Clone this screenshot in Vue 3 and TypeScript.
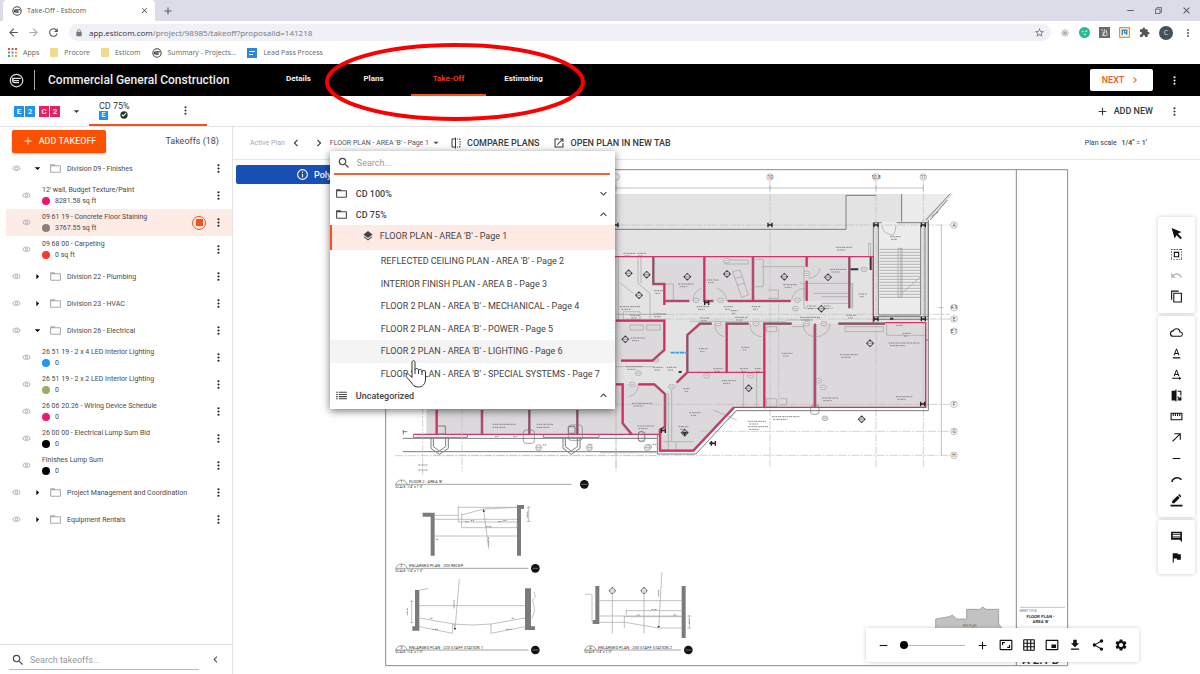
<script setup lang="ts">
import { h, ref } from 'vue'

const paths: Record<string, string> = {
  search: 'M15.5 14h-.79l-.28-.27A6.471 6.471 0 0 0 16 9.5 6.5 6.5 0 1 0 9.5 16c1.61 0 3.09-.59 4.23-1.57l.27.28v.79l5 4.99L20.49 19l-4.99-5zm-6 0C7.01 14 5 11.99 5 9.5S7.01 5 9.5 5 14 7.01 14 9.5 11.99 14 9.5 14z',
  more: 'M12 8a2 2 0 1 0 0-4 2 2 0 0 0 0 4zm0 2a2 2 0 1 0 0 4 2 2 0 0 0 0-4zm0 6a2 2 0 1 0 0 4 2 2 0 0 0 0-4z',
  folder: 'M20 6h-8l-2-2H4c-1.1 0-1.99.9-1.99 2L2 18c0 1.1.9 2 2 2h16c1.1 0 2-.9 2-2V8c0-1.1-.9-2-2-2zm0 12H4V8h16v10z',
  eye: 'M12 6c3.79 0 7.17 2.13 8.82 5.5C19.17 14.87 15.79 17 12 17s-7.17-2.13-8.82-5.5C4.83 8.13 8.21 6 12 6m0-2C7 4 2.73 7.11 1 11.5 2.73 15.89 7 19 12 19s9.27-3.11 11-7.5C21.27 7.11 17 4 12 4zm0 5a2.5 2.5 0 1 1 0 5 2.5 2.5 0 0 1 0-5m0-2a4.5 4.5 0 1 0 0 9 4.5 4.5 0 0 0 0-9z',
  settings: 'M19.14 12.94c.04-.3.06-.61.06-.94 0-.32-.02-.64-.07-.94l2.03-1.58c.18-.14.23-.41.12-.61l-1.92-3.32c-.12-.22-.37-.29-.59-.22l-2.39.96c-.5-.38-1.03-.7-1.62-.94l-.36-2.54c-.04-.24-.24-.41-.48-.41h-3.84c-.24 0-.43.17-.47.41l-.36 2.54c-.59.24-1.13.57-1.62.94l-2.39-.96c-.22-.08-.47 0-.59.22L2.74 8.87c-.12.21-.08.47.12.61l2.03 1.58c-.05.3-.09.63-.09.94s.02.64.07.94l-2.03 1.58c-.18.14-.23.41-.12.61l1.92 3.32c.12.22.37.29.59.22l2.39-.96c.5.38 1.03.7 1.62.94l.36 2.54c.05.24.24.41.48.41h3.84c.24 0 .44-.17.47-.41l.36-2.54c.59-.24 1.13-.56 1.62-.94l2.39.96c.22.08.47 0 .59-.22l1.92-3.32c.12-.22.07-.47-.12-.61l-2.01-1.58zM12 15.6a3.6 3.6 0 1 1 0-7.2 3.6 3.6 0 0 1 0 7.2z',
  share: 'M18 16.08c-.76 0-1.44.3-1.96.77L8.91 12.7c.05-.23.09-.46.09-.7s-.04-.47-.09-.7l7.05-4.11c.54.5 1.25.81 2.04.81a3 3 0 1 0-3-3c0 .24.04.47.09.7L8.04 9.81A3 3 0 1 0 6 15c.79 0 1.5-.31 2.04-.81l7.12 4.16c-.05.21-.08.43-.08.65A2.92 2.92 0 1 0 18 16.08z',
  download: 'M19 9h-4V3H9v6H5l7 7 7-7zM5 18v2h14v-2H5z',
  grid: 'M20 2H4c-1.1 0-2 .9-2 2v16c0 1.1.9 2 2 2h16c1.1 0 2-.9 2-2V4c0-1.1-.9-2-2-2zM8 20H4v-4h4v4zm0-6H4v-4h4v4zm0-6H4V4h4v4zm6 12h-4v-4h4v4zm0-6h-4v-4h4v4zm0-6h-4V4h4v4zm6 12h-4v-4h4v4zm0-6h-4v-4h4v4zm0-6h-4V4h4v4z',
  aspect: 'M19 12h-2v3h-3v2h5v-5zM7 9h3V7H5v5h2V9zm14-6H3c-1.1 0-2 .9-2 2v14c0 1.1.9 2 2 2h18c1.1 0 2-.9 2-2V5c0-1.1-.9-2-2-2zm0 16H3V5h18v14z',
  pip: 'M19 11h-8v6h8v-6zm4 8V5c0-1.1-.9-2-2-2H3c-1.1 0-2 .9-2 2v14c0 1.1.9 2 2 2h18c1.1 0 2-.9 2-2zm-2 0H3V5h18v14z',
  plus: 'M19 13h-6v6h-2v-6H5v-2h6V5h2v6h6v2z',
  minus: 'M19 13H5v-2h14v2z',
  close: 'M19 6.4 17.6 5 12 10.6 6.4 5 5 6.4l5.6 5.6L5 17.6 6.4 19l5.6-5.6 5.6 5.6 1.4-1.4-5.6-5.6z',
  left: 'M15.4 7.4 14 6l-6 6 6 6 1.4-1.4-4.6-4.6z',
  right: 'M10 6 8.6 7.4l4.6 4.6-4.6 4.6L10 18l6-6z',
  up: 'M12 8l-6 6 1.4 1.4 4.6-4.6 4.6 4.6L18 14z',
  down: 'M16.6 8.6 12 13.2 7.4 8.6 6 10l6 6 6-6z',
  caretDown: 'M6 9l6 6 6-6z',
  caretRight: 'M9 5l7 7-7 7z',
  layers: 'M11.99 18.54l-7.37-5.73L3 14.07l9 7 9-7-1.63-1.27-7.38 5.74zM12 16l7.36-5.73L21 9l-9-7-9 7 1.63 1.27L12 16z',
  list: 'M2 5h3v2H2zm5 0h15v2H7zM2 9h3v2H2zm5 0h15v2H7zM2 13h3v2H2zm5 0h15v2H7zM2 17h3v2H2zm5 0h15v2H7z',
  compare: 'M10 3H5c-1.1 0-2 .9-2 2v14c0 1.1.9 2 2 2h5v2h2V1h-2v2zm0 16H5V5h5v14zM14 3h2v2h-2zm4 0h1c1.1 0 2 .9 2 2v1h-2V5h-1zm1 5h2v3h-2zm0 5h2v3h-2zm0 5h2v1c0 1.1-.9 2-2 2h-1v-2h1zm-5 1h2v2h-2z',
  openNew: 'M3 3h9v2H5v14h14v-7h2v9H3zM14 3h7v7h-2V6.4l-9.8 9.8-1.4-1.4L17.6 5H14z',
  info: 'M11 7h2v2h-2zm0 4h2v6h-2zm1-9a10 10 0 1 0 0 20 10 10 0 0 0 0-20zm0 18a8 8 0 1 1 0-16 8 8 0 0 1 0 16z',
  back: 'M20 11H7.8l5.6-5.6L12 4l-8 8 8 8 1.4-1.4L7.8 13H20z',
  forward: 'M4 11h12.2l-5.6-5.6L12 4l8 8-8 8-1.4-1.4 5.6-5.6H4z',
  refresh: 'M17.65 6.35A8 8 0 1 0 19.73 14h-2.08A6 6 0 1 1 12 6c1.66 0 3.14.69 4.22 1.78L13 11h7V4l-2.35 2.35z',
  lock: 'M18 8h-1V6A5 5 0 0 0 7 6v2H6c-1.1 0-2 .9-2 2v10c0 1.1.9 2 2 2h12c1.1 0 2-.9 2-2V10c0-1.1-.9-2-2-2zM9 6a3 3 0 0 1 6 0v2H9z',
  star: 'M22 9.24l-7.19-.62L12 2 9.19 8.63 2 9.24l5.46 4.73L5.82 21 12 17.27 18.18 21l-1.63-7.03L22 9.24zM12 15.4l-3.76 2.27 1-4.28-3.32-2.88 4.38-.38L12 6.1l1.71 4.04 4.38.38-3.32 2.88 1 4.28L12 15.4z',
  snow: 'M11 2h2v7.3l5.4-4.9 1.3 1.4-5 5.2H22v2h-7.3l5 5.2-1.3 1.4-5.4-4.9V22h-2v-7.3l-5.4 4.9-1.3-1.4 5-5.2H2v-2h7.3l-5-5.2 1.3-1.4L11 9.3z',
  puzzle: 'M20.5 11H19V7c0-1.1-.9-2-2-2h-4V3.5a2.5 2.5 0 0 0-5 0V5H4c-1.1 0-1.99.9-1.99 2v3.8H3.5a2.7 2.7 0 0 1 0 5.4H2V20c0 1.1.9 2 2 2h3.8v-1.5a2.7 2.7 0 0 1 5.4 0V22H17c1.1 0 2-.9 2-2v-4h1.5a2.5 2.5 0 0 0 0-5z',
  restore: 'M7 3h14v14h-4v4H3V7h4zm2 4h8v8h2V5H9zM5 9v10h10V9z',
  check: 'M12 1a11 11 0 1 0 0 22 11 11 0 0 0 0-22zm-2.5 16L4.5 12l2-2 3 3 8-7.5 2 2z',
  cursor: 'M3 2l18 7-6.5 3.500L22 20l-2.5 2.5-7.5-7.5L8.5 21z',
  marquee: 'M2 2h3v1H2zm5 0h3v1H7zm5 0h3v1h-3zm5 0h5v1h-5zM2 6h1v3H2zm19 0h1v3h-1zM2 11h1v3H2zm19 0h1v3h-1zM2 16h1v6H2zm19 0h1v6h-1zM6 21h3v1H6zm5 0h3v1h-3zm5 0h3v1h-3zM7 7h10v10H7zm2 2v6h6V9z',
  undo: 'M12.5 8c-2.65 0-5.05 1-6.9 2.6L2 7v9h9l-3.62-3.62A8 8 0 0 1 20 16l2.37-.78A10.5 10.5 0 0 0 12.5 8z',
  copy: 'M16 1H2v17h2V3h12zM6 5v18h16V5zm2 2h12v14H8z',
  cloud: 'M19.35 10.04A7.49 7.49 0 0 0 12 4C9.11 4 6.6 5.64 5.35 8.04A5.994 5.994 0 0 0 6 20h13a5 5 0 0 0 .35-9.96zM19 18H6a4 4 0 0 1 0-8h.71a5.5 5.5 0 0 1 10.79 1.5v.5H19a3 3 0 0 1 0 6z',
  textLine: 'M5 19h14v2H5zm4.5-6h5l.9 2.2h2.1L12.75 3h-1.5L6.5 15.2h2.1zM12 5.5l1.9 5.5h-3.8z',
  textArrow: 'M4 18h13v-2l4 3-4 3v-2H4zm5.5-5h5l.9 2.2h2.1L12.75 3h-1.5L6.5 15.2h2.1zM12 5.5l1.9 5.5h-3.8z',
  flip: 'M3 3h7V1h2v22h-2v-2H3zm11 0h7v9h-2V5h-5zm0 10l5 4v-3h2v7h-7v-2h3l-3-2z',
  ruler: 'M1 5h22v14H1zm2 2v10h18V7h-2v4h-2V7h-2v4h-2V7h-2v4H9V7H7v4H5V7z',
  arrow: 'M8 4h12v12h-2V7.4L5.4 20 4 18.6 16.6 6H8z',
  arc: 'M2 16C5 6 15 5 22 11l-1.5 2.5C14 8 7 10 4.5 17z',
  pen: 'M4 13v4h4L18 7l-4-4zM19 6l2-2-4-4-2 2zM1 20h22v3H1z',
  comment: 'M2 3h20v19l-4-4H2zm3 3v2h14V6zm0 3v2h14V9zm0 3v2h14v-2z',
  flag: 'M14.4 6 14 4H5v17h2v-7h5.6l.4 2h7V6z',
}

const Icon = (props: { n: string; s: number }) =>
  h('svg', { class: 'icon', viewBox: '0 0 24 24', width: props.s, height: props.s, 'aria-hidden': 'true' }, [
    h('path', { d: paths[props.n], fill: 'currentColor', 'fill-rule': 'evenodd' }),
  ])
Icon.props = ['n', 's']

interface Row { label: string; open?: boolean; qty?: string; color?: string; active?: boolean }
const rows: Row[] = [
  { label: 'Division 09 - Finishes', open: true },
  { label: "12' wall, Budget Texture/Paint", qty: '8281.58 sq ft', color: '#f0146c' },
  { label: '09 61 19 - Concrete Floor Staining', qty: '3767.55 sq ft', color: '#8d7f7f', active: true },
  { label: '09 68 00 - Carpeting', qty: '0 sq ft', color: '#f8382c' },
  { label: 'Division 22 - Plumbing', open: false },
  { label: 'Division 23 - HVAC', open: false },
  { label: 'Division 26 - Electrical', open: true },
  { label: '26 51 19 - 2 x 4 LED Interior Lighting', qty: '0', color: '#2196f3' },
  { label: '26 51 19 - 2 x 2 LED Interior Lighting', qty: '0', color: '#9fa968' },
  { label: '26 06 20.26 - Wiring Device Schedule', qty: '0', color: '#ee1a66' },
  { label: '26 00 00 - Electrical Lump Sum Bid', qty: '0', color: '#000' },
  { label: 'Finishes Lump Sum', qty: '0', color: '#000' },
  { label: 'Project Management and Coordination', open: false },
  { label: 'Equipment Rentals', open: false },
]
const tabs = ['Details', 'Plans', 'Take-Off', 'Estimating']
const pages = [
  "REFLECTED CEILING PLAN - AREA 'B' - Page 2",
  'INTERIOR FINISH PLAN - AREA B - Page 3',
  "FLOOR 2 PLAN - AREA 'B' - MECHANICAL - Page 4",
  "FLOOR 2 PLAN - AREA 'B' - POWER - Page 5",
  "FLOOR 2 PLAN - AREA 'B' - LIGHTING - Page 6",
  "FLOOR 2 PLAN - AREA 'B' - SPECIAL SYSTEMS - Page 7",
]
const hovered = 4
const toolGroups = [
  [['cursor', 'Select'], ['marquee', 'Select area'], ['undo', 'Undo'], ['copy', 'Copy']],
  [['cloud', 'Cloud'], ['textLine', 'Text'], ['textArrow', 'Callout'], ['flip', 'Flip'], ['ruler', 'Measure'], ['arrow', 'Arrow'], ['minus', 'Line'], ['arc', 'Arc'], ['pen', 'Pen']],
  [['comment', 'Comment'], ['flag', 'Flag']],
]
const viewTools = [['aspect', 'Fit'], ['grid', 'Grid'], ['pip', 'Overview'], ['download', 'Download'], ['share', 'Share'], ['settings', 'Settings']]
const zoomLevel = ref(0)
const planSearch = ref('')
const takeoffSearch = ref('')

const treads = Array.from({ length: 17 }, (_, i) => 268 + i * 9)
const gridTop = [[48, ''], [510, '10'], [828, '10.8'], [970, '11']] as [number, string][]
const gridSide = [[195, 'A'], [443, 'A.9'], [477, 'E'], [514, 'E.1'], [733, 'F'], [814, 'G'], [886, 'H']] as [number, string][]
// Room tags and dimension notes: x, y, length
const notes = [
  [235, 372, 46], [320, 360, 36], [550, 374, 42], [690, 328, 50], [776, 402, 24], [870, 230, 32], [708, 262, 48], [392, 452, 22],
  [92, 534, 44], [296, 566, 26], [424, 562, 24], [545, 580, 34], [720, 584, 54], [866, 549, 92], [888, 710, 50], [666, 714, 50],
  [96, 730, 60], [112, 798, 52], [268, 758, 34], [444, 784, 54], [444, 800, 60], [516, 770, 84], [365, 662, 44], [162, 392, 26],
  [290, 440, 40], [372, 440, 26], [455, 440, 26], [620, 438, 30], [672, 438, 20], [405, 472, 40], [300, 474, 30], [600, 472, 60],
  [78, 620, 50], [160, 622, 30], [200, 622, 30], [340, 626, 30], [420, 626, 24], [464, 626, 20], [60, 440, 60], [90, 466, 30],
  [160, 462, 38], [70, 280, 36], [112, 280, 26], [740, 466, 30], [908, 520, 24], [236, 800, 30], [250, 686, 20], [885, 488, 40],
]
const markers = [[86, 340], [140, 344], [117, 406], [262, 350], [381, 342], [553, 350], [684, 352], [664, 446], [76, 538], [810, 550], [446, 685], [254, 818], [785, 778], [18, 480]]
const tags = [[380, 302], [620, 340], [792, 328], [288, 421], [362, 421], [592, 421], [586, 446], [354, 491], [468, 491], [620, 491], [672, 491], [97, 673], [320, 647], [452, 647], [215, 680], [146, 860], [675, 775], [670, 682], [656, 662], [168, 600], [115, 640]]
const columns = [[48, 195], [510, 195], [828, 195], [970, 195], [828, 477], [970, 477], [968, 732], [340, 850], [320, 428], [190, 812]]
const captions = [
  { x: 48, y: 253, n: '1', t: "FLOOR 2 - AREA 'B'", end: 575, dot: 613 },
  { x: 48, y: 505, n: '2', t: 'ENLARGED PLAN - 200 RECEP', end: 445, dot: 466 },
  { x: 48, y: 750, n: '3', t: 'ENLARGED PLAN - 220 STAFF STATION 1', end: 445, dot: 466 },
  { x: 615, y: 750, n: '4', t: 'ENLARGED PLAN - 250 STAFF STATION 2', end: 903, dot: 925 },
]
const walls = 'M160 290V372H193V435M193 423H268M313 290V423H340M383 423H459V290M459 423H572M620 290V320M620 362V423M748 290V445M48 482H193V570L157 602H63M335 491H300L262 525V637M380 637V491H446M262 637L230 668M493 742V491H575M645 742V491M715 491H855M48 673H68V790L95 823M115 673H163L195 702V800L180 810V872H280L402 742M-490 750V823M-354 750V823M-212 750V823M-68 750V823'
const outline = 'M-400 290H820V490M855 488H977V742H402L280 872H180V823H-560M262 637H493'
</script>

<template>
  <div class="app">
    <header class="browser">
      <div class="tabstrip">
        <div class="tab">
          <svg class="logo" viewBox="0 0 24 24" width="10" height="10"><circle cx="12" cy="12" r="10" /><path d="M20 9H8.500a3 3 0 0 0 0 6H16M6 12h10" /></svg>
          <span class="grow">Take-Off - Esticom</span>
          <button aria-label="Close tab"><Icon n="close" :s="9" /></button>
        </div>
        <button class="newtab" aria-label="New tab"><Icon n="plus" :s="12" /></button>
        <div class="window">
          <button aria-label="Minimize"><Icon n="minus" :s="11" /></button>
          <button aria-label="Restore"><Icon n="restore" :s="9" /></button>
          <button aria-label="Close"><Icon n="close" :s="11" /></button>
        </div>
      </div>
      <div class="address">
        <button aria-label="Back"><Icon n="back" :s="13" /></button>
        <button aria-label="Forward" class="dim"><Icon n="forward" :s="13" /></button>
        <button aria-label="Reload"><Icon n="refresh" :s="13" /></button>
        <div class="url">
          <Icon n="lock" :s="8" />
          <span class="grow"><b>app.esticom.com</b>/project/98985/takeoff?proposalId=141218</span>
          <Icon n="star" :s="11" />
        </div>
        <div class="extensions">
          <Icon n="snow" :s="10" class="dim" />
          <svg viewBox="0 0 24 24" width="11" height="11"><circle cx="12" cy="12" r="12" fill="#27bb93" /><circle cx="8" cy="10" r="2" fill="#c8f2e5" /><circle cx="16" cy="9" r="2" fill="#c8f2e5" /><circle cx="13" cy="16" r="2" fill="#c8f2e5" /></svg>
          <svg viewBox="0 0 24 24" width="11" height="11"><path fill="#6a6a6a" d="M0 0h24v24H0z" /><path fill="none" stroke="#ddd" stroke-width="2" d="M5 5l5 4M12 5v5M12 19l-5-1M9 11v7M16 6v5" /><circle cx="14" cy="15" r="4" fill="none" stroke="#ddd" stroke-width="2" /></svg>
          <svg viewBox="0 0 24 24" width="11" height="11"><rect x="1" y="1" width="22" height="22" rx="3" fill="#fff4df" stroke="#f59222" stroke-width="3" /><path d="M7 18V7h10v10M12 7v6h5" fill="none" stroke="#2b8fc8" stroke-width="3" /></svg>
          <Icon n="puzzle" :s="11" />
          <span class="avatar">C</span>
          <button aria-label="Browser menu"><Icon n="more" :s="12" /></button>
        </div>
      </div>
      <nav class="bookmarks">
        <a href="#apps"><svg viewBox="0 0 9 9" width="9" height="9"><path fill="#dc4c3f" d="M0 0h2v2H0zM3.500 0h2v2h-2zM7 0h2v2H7z" /><path fill="#4aa564" d="M0 3.500h2v2H0z" /><path fill="#4285f4" d="M3.500 3.500h2v2h-2z" /><path fill="#e9a13b" d="M7 3.500h2v2H7zM3.500 7h2v2h-2zM7 7h2v2H7z" /><path fill="#4aa564" d="M0 7h2v2H0z" /></svg>Apps</a>
        <a href="#procore"><i class="bfolder"></i>Procore</a>
        <a href="#esticom"><i class="bfolder"></i>Esticom</a>
        <a href="#summary"><svg class="logo" viewBox="0 0 24 24" width="10" height="10"><circle cx="12" cy="12" r="10" /><path d="M20 9H8.500a3 3 0 0 0 0 6H16M6 12h10" /></svg>Summary - Projects...</a>
        <a href="#lead"><svg viewBox="0 0 10 10" width="10" height="10"><path fill="#2f86e0" d="M0 0h10v10H0z" /><path stroke="#fff" d="M2 3.500h6M2 6.500h4" /></svg>Lead Pass Process</a>
      </nav>
    </header>

    <div class="topbar">
      <svg class="logo brand" viewBox="0 0 24 24" width="15" height="15"><circle cx="12" cy="12" r="10" /><path d="M19 8.500H9a3.500 3.500 0 0 0 0 7h7M7 12h9M12 8.500H5" /></svg>
      <h1>Commercial General Construction</h1>
      <nav class="tabs">
        <a v-for="t in tabs" :key="t" :href="'#' + t" :class="{ on: t === 'Take-Off' }">{{ t }}</a>
        <svg class="callout" viewBox="0 0 262 80" width="262" height="80" aria-hidden="true"><ellipse cx="131" cy="40" rx="128" ry="37" /></svg>
      </nav>
      <button class="next">NEXT <Icon n="right" :s="12" /></button>
      <button class="menu" aria-label="Project menu"><Icon n="more" :s="13" /></button>
    </div>

    <div class="sheetbar">
      <button class="chips" aria-label="Estimates"><b>E</b><b>2</b><b class="pink">C</b><b class="pink">2</b><Icon n="caretDown" :s="11" /></button>
      <div class="sheet">
        <div>
          <span>CD 75%</span>
          <div class="status"><b>E</b><Icon n="check" :s="8" /></div>
        </div>
        <button aria-label="Sheet menu"><Icon n="more" :s="13" /></button>
      </div>
      <button class="addnew"><Icon n="plus" :s="13" />ADD NEW</button>
      <button class="menu" aria-label="Estimate menu"><Icon n="more" :s="13" /></button>
    </div>

    <div class="body">
      <aside>
        <div class="sidehead">
          <button class="add"><Icon n="plus" :s="12" />ADD TAKEOFF</button>
          <span>Takeoffs (18)</span>
        </div>
        <ul class="rows">
          <li v-for="r in rows" :key="r.label" :class="{ item: r.qty, active: r.active }">
            <button class="eye" :aria-label="'Show ' + r.label"><Icon n="eye" :s="9" /></button>
            <template v-if="r.qty">
              <div class="info">
                <span>{{ r.label }}</span>
                <span class="qty"><i :style="{ background: r.color }"></i>{{ r.qty }}</span>
              </div>
              <span v-if="r.active" class="rec"></span>
            </template>
            <template v-else>
              <button class="twist" :aria-label="'Toggle ' + r.label"><Icon :n="r.open ? 'caretDown' : 'caretRight'" :s="r.open ? 11 : 9" /></button>
              <Icon n="folder" :s="13" class="fold" />
              <span class="grow">{{ r.label }}</span>
            </template>
            <button class="dots" :aria-label="'Menu for ' + r.label"><Icon n="more" :s="13" /></button>
          </li>
        </ul>
        <div class="sidefoot">
          <label><Icon n="search" :s="14" /><input v-model="takeoffSearch" type="text" placeholder="Search takeoffs..." aria-label="Search takeoffs" /></label>
          <button aria-label="Collapse"><Icon n="left" :s="13" /></button>
        </div>
      </aside>

      <main>
        <div class="planbar">
          <span class="muted">Active Plan</span>
          <button aria-label="Previous plan"><Icon n="left" :s="14" /></button>
          <button aria-label="Next plan"><Icon n="right" :s="14" /></button>
          <div class="picker">
            <button class="current" aria-expanded="true">FLOOR PLAN - AREA 'B' - Page 1<Icon n="caretDown" :s="10" /></button>
            <div class="popup">
              <label class="find"><Icon n="search" :s="14" /><input v-model="planSearch" type="text" placeholder="Search..." aria-label="Search plans" /></label>
              <button class="group"><Icon n="folder" :s="13" /><span>CD 100%</span><Icon n="down" :s="13" /></button>
              <button class="group"><Icon n="folder" :s="13" /><span>CD 75%</span><Icon n="up" :s="13" /></button>
              <button class="chosen"><Icon n="layers" :s="12" />FLOOR PLAN - AREA 'B' - Page 1</button>
              <ul class="pages">
                <li v-for="(p, i) in pages" :key="p"><button :class="{ hover: i === hovered }">{{ p }}</button></li>
              </ul>
              <button class="group"><Icon n="list" :s="13" /><span>Uncategorized</span><Icon n="up" :s="13" /></button>
              <svg class="hand" viewBox="0 0 24 30" width="24" height="30" aria-hidden="true"><path d="M8 16V3.500C8 1 11 1 11 3.500V11c0-2 3.500-2 3.500 0v1c0-2 3.500-2 3.500 0v1c0-2 3.500-2 3.500 0v7c0 5-3 8-7 8-4 0-5.500-1.500-7.500-5L2.500 18C1 15.500 4 14 5.500 16L8 18.500z" /><path d="M11 11v4M14.500 12v3M18 13v3" /></svg>
            </div>
          </div>
          <button class="action"><Icon n="compare" :s="12" />COMPARE PLANS</button>
          <button class="action"><Icon n="openNew" :s="12" />OPEN PLAN IN NEW TAB</button>
          <span class="scale">Plan scale <b>1/4" = 1'</b></span>
        </div>

        <div class="canvas">
          <svg class="plan" viewBox="0 0 2901 1542" preserveAspectRatio="xMinYMin meet" role="img" aria-label="Floor plan">
            <g transform="translate(1101 0)">
              <path class="frame" d="M-643 29H1403V1517H-643zM1249 29V1517" />
              <path fill="#e4e3e4" d="M-520 102H1060L985 180V742H405L283 872H180V823H-520z" />
              <path fill="#dbd9db" d="M-520 482H193V570L157 602H48V673H165L195 702V823H-520zM160 290H748V423H193V372H160zM300 491H493V637H262V525zM493 491H977V742H402L280 872H180V720L262 637H493z" />
              <path fill="#ececec" d="M738 102H905V185H835V465H965V180L1055 102H738z" />
              <path class="axis" d="M48 62V925M510 62V925M828 62V925M970 62V925M-400 195H1050M48 463H1050M0 477H1050M0 733H1050M300 814H1050M-500 886H1050M536 430V740" />
              <path class="thin" d="M48 84H972M1024 195V886M1015 443H1030M48 76V92M510 76V92M828 76V92M970 76V92" />
              <g v-for="[x, t] in gridTop" :key="x" class="bubble"><circle :cx="x" cy="51" r="10" /><text :x="x" y="56">{{ t }}</text></g>
              <g v-for="[y, t] in gridSide" :key="y" class="bubble"><circle cx="1062" :cy="y" r="10" /><text x="1062" :y="y + 5">{{ t }}</text></g>
              <path class="struct" d="M-300 208H738V106H828M905 102V185M890 188H985V470H820V188H845M835 195V465H962V195M975 195V470M985 180V752H408L288 882H172V825M978 180L1050 102M990 180L1042 120M995 170L1015 155M820 478H985M975 540H985" />
              <path class="thin" d="M902 265V410M894 265H906V412H894zM962 350L906 400M845 195Q850 225 880 225Q888 210 888 195M55 290V480M114 290V370L150 400V480M123 290V370M62 370L100 400M70 455H120V478H70zM195 372H220V423M466 298H490V380H466M485 320H612V415M600 370H745M612 370V445H700M665 410H748M665 430H748M640 400H748M735 500H850V515H735zM860 490V526H975M430 637V742M470 637V742M500 500H530V515H500zM500 716H530V740H500zM540 716H560V735H540M215 690V845M190 845H280M205 700V870M228 845V870M340 750L410 780M385 780L412 750M90 495H130V510H90zM140 495H180V510H140zM756 370V445M752 370H758V445M806 290V250H812V330M505 390H535V415H505M398 335L420 330L445 405L425 412zM405 355L428 350M410 375L434 370M280 423A35 35 0 0 1 305 385M380 423A40 40 0 0 0 350 385M575 420A40 40 0 0 1 612 385M345 491A35 35 0 0 0 372 530M450 491A35 35 0 0 0 485 530M610 491A35 35 0 0 0 640 530M650 530A40 40 0 0 0 690 491M625 355A35 35 0 0 0 660 325M115 673A35 35 0 0 1 85 710M48 620H160M48 463H200M270 484H560M640 500V742M560 480H640M575 500H610M375 300H445V312H375zM0 835H170M0 878H170" />
              <path v-for="y in treads" :key="y" class="tread" :d="`M838 ${y}H960`" />
              <path class="dark" d="M750 328H775M812 290V330M870 476H880M236 636H245M328 850H340" />
              <g v-for="([x, y, w], i) in notes" :key="'n' + i" class="note"><path :d="`M${x} ${y}h${w}M${x + 4} ${y + 8}h${w / 2}`" /></g>
              <g v-for="([x, y], i) in tags" :key="'t' + i" class="tag"><ellipse :cx="x" :cy="y" rx="9" ry="7" /><path :d="`M${x - 5} ${y}h10`" /></g>
              <g v-for="([x, y], i) in markers" :key="'m' + i" class="marker"><path :d="`M${x - 12} ${y}l12 -12l12 12l-12 12z`" /><circle :cx="x" :cy="y" r="7" /><path class="mid" :d="`M${x - 5} ${y}h10`" /></g>
              <path class="wallback" :d="walls" />
              <path class="wall" :d="walls" />
              <path class="outline" :d="outline" />
              <path v-for="([x, y], i) in columns" :key="'c' + i" class="column" :d="`M${x - 6} ${y - 7}v14M${x + 6} ${y - 7}v14M${x - 6} ${y}h12`" />
              <rect class="loop" x="632" y="735" width="25" height="28" rx="8" /><rect class="loop" x="115" y="815" width="18" height="28" rx="7" />
              <path d="M212 578H262" stroke="#3b9de0" stroke-width="5" stroke-dasharray="12 2" />
              <path fill="#c2c2c2" stroke="#888" stroke-width="2" d="M1007 1410V1377L1047 1370L1057 1365L1070 1377H1100V1348H1140L1148 1341L1158 1348H1196V1392L1204 1402V1410z" />
              <path class="thin" d="M1260 1342H1395" />
              <text class="tiny" x="1258" y="1357">SHEET TITLE</text>
              <text class="tiny" x="1088" y="1401">KEY PLAN</text>
              <text class="sheetname" x="1322" y="1375">FLOOR PLAN -</text>
              <text class="sheetname" x="1322" y="1389">AREA 'B'</text>
              <text class="sheetno" x="1322" y="1512">A 2.1 B</text>
            </g>

            <g transform="translate(441 720)">
              <path class="struct" d="M68 115H830M68 155H830M100 103V112H262V103M490 103V112H657V103M153 112V145L178 163L205 145V112M160 112V140L178 153L197 140V112M549 112V145L574 163L600 145V112M556 112V140L574 153L592 140V112M68 95H82M70 90V104" />
              <path class="axis" d="M128 20V225M246 20V215M708 30V215M45 167H830" />
              <rect class="loop" x="430" y="90" width="33" height="40" rx="8" /><rect class="loop" x="565" y="75" width="42" height="46" rx="8" /><rect class="loop" x="775" y="95" width="20" height="30" rx="7" />
              <path class="struct" d="M172 78H196V102H172zM565 80H585V100H565z" />
              <g class="note"><path d="M338 73h70M338 82h40M470 73h50M470 82h40M115 195h28M115 210h28M345 110h12M400 110h12M625 133h12M488 135h12M818 133h12" /></g>
              <g class="tag"><circle cx="476" cy="143" r="9" /><circle cx="628" cy="143" r="9" /><circle cx="802" cy="143" r="9" /><path d="M468 143h16M620 143h16M794 143h16" /></g>

              <path class="solid" d="M128 338H164V467H152V350H128zM411 315H432V327H423V467H411zM105 570H118V692H97V679H105zM435 565H453V679H465V690H435zM646 558H658V672H638V660H646zM905 558H917V714H905z" />
              <path class="thin" d="M164 346H235M164 358H411M164 408H411M235 322H411M235 318V366H411M245 345L311 327L411 322M245 340V383H411V370M311 330L326 446M446 318V366M440 322H452M440 364H452M118 617H435M118 654L222 672L225 688M118 680L218 700V672Q280 678 333 672V700L435 680M333 672L435 654M238 537L225 688M95 600V668M90 604H100M90 668H100M120 570L145 566M462 575L466 590L458 600L464 630L456 655M658 602H905M658 648H905M658 667H735L835 684H905M733 648V685M739 632H905M739 628V645M846 515L836 684M697 560V700M792 560V700M636 585V665M615 583H636M928 645V685M922 648H934M922 684H934M733 650H905" />
              <g class="note"><path d="M255 365h12M272 362h10M355 365h12M370 362h10M318 380h18M150 655h8M158 688h16M395 655h8M378 688h16M770 645h10M880 645h10M814 629h16M168 418h8M222 600v25M836 570v20M326 412v25M82 625v22M442 335v20M928 656v18" /></g>
              <g class="marker"><path d="M686 572l11-11 11 11-11 11zM781 572l11-11 11 11-11 11zM308 335l3-8 4 8zM221 684h8l-4 6zM832 678h8l-4 6zM906 95l8 12 8-12z" /><circle cx="697" cy="572" r="8" /><circle cx="792" cy="572" r="8" /></g>
              <g v-for="c in captions" :key="c.n" class="caption">
                <path :d="`M${c.x} ${c.y}A17 17 0 0 1 ${c.x + 33} ${c.y}M${c.x - 3} ${c.y}H${c.end}`" />
                <text :x="c.x + 13" :y="c.y - 3">{{ c.n }}</text>
                <text :x="c.x + 39" :y="c.y - 3">{{ c.t }}</text>
                <text class="sub" :x="c.x - 2" :y="c.y + 10">SCALE: 1/4" = 1'-0"</text>
                <circle :cx="c.dot" :cy="c.y" r="13" />
                <path class="slot" :d="`M${c.dot - 9} ${c.y}h18`" />
              </g>
            </g>
          </svg>

          <div class="banner"><Icon n="info" :s="13" />Poly</div>

          <div class="tools">
            <div v-for="(g, i) in toolGroups" :key="i" class="card">
              <button v-for="[n, label] in g" :key="n" :aria-label="label" :class="{ off: n === 'undo' }"><Icon :n="n" :s="13" /></button>
            </div>
          </div>

          <div class="zoombar card">
            <button aria-label="Zoom out"><Icon n="minus" :s="13" /></button>
            <input v-model="zoomLevel" type="range" min="0" max="100" aria-label="Zoom" />
            <button aria-label="Zoom in"><Icon n="plus" :s="13" /></button>
            <button v-for="[n, label] in viewTools" :key="n" :aria-label="label"><Icon :n="n" :s="14" /></button>
          </div>
        </div>
      </main>
    </div>
  </div>
</template>

<style>
body { margin: 0; }
</style>

<style scoped>
* { box-sizing: border-box; }
.app { min-height: 100vh; display: flex; flex-direction: column; font: 7px/12px Roboto, "Liberation Sans", sans-serif; color: #3a3a3a; background: #fff; overflow: hidden; }
button { border: 0; padding: 0; background: none; font: inherit; color: inherit; display: flex; align-items: center; justify-content: center; }
a { color: inherit; text-decoration: none; }
ul { list-style: none; margin: 0; padding: 0; }
input { font: inherit; color: inherit; border: 0; outline: 0; background: none; min-width: 0; padding: 0; }
svg { display: block; flex: none; }
.grow { flex: 1; }
.dim { color: #aaa; }
.logo { fill: none; stroke: #444; stroke-width: 2.5; }

.browser { font-family: "Open Sans", "Noto Sans", sans-serif; color: #555; }
.tabstrip { height: 21px; background: #dcdce9; display: flex; align-items: center; }
.tab { width: 152px; height: 21px; margin-left: 3px; padding: 0 6px 0 9px; background: #fff; border-radius: 4px 4px 0 0; display: flex; align-items: center; gap: 5px; }
.newtab { margin-left: 7px; }
.window { margin-left: auto; display: flex; align-items: center; gap: 18px; padding-right: 8px; }
.address { height: 23px; display: flex; align-items: center; padding: 0 6px 0 7px; gap: 7px; }
.url { flex: 1; height: 17px; margin-left: 2px; padding: 0 6px; border-radius: 9px; background: #f0f0f6; display: flex; align-items: center; gap: 6px; font-size: 8px; color: #777; }
.url b { font-weight: 400; color: #333; }
.extensions { display: flex; align-items: center; gap: 9px; padding-left: 2px; }
.avatar { width: 14px; height: 14px; border-radius: 50%; background: #45525b; color: #cfe3ee; text-align: center; line-height: 14px; }
.bookmarks { height: 20px; display: flex; align-items: center; gap: 11px; padding: 0 8px 3px; color: #666; }
.bookmarks a { display: flex; align-items: center; gap: 6px; }
.bfolder { width: 8px; height: 9px; border-radius: 1px; background: #f0da8b; }

.topbar { height: 32px; background: #000; color: #f0f0f0; display: flex; align-items: center; padding-left: 9px; }
.brand { stroke: #ddd; stroke-width: 2; }
h1 { width: 227px; margin: 0 0 0 10px; padding-left: 13px; border-left: 1px solid #aaa; font-size: 12px; line-height: 20px; font-weight: 500; white-space: nowrap; color: #eee; }
.tabs { align-self: stretch; display: flex; position: relative; font-size: 8px; font-weight: 700; }
.tabs a { width: 75px; display: flex; align-items: center; justify-content: center; border-bottom: 2px solid transparent; }
.tabs a.on { color: #f8301e; border-color: #f4511e; }
.callout { position: absolute; left: 63px; top: -22px; z-index: 9; fill: none; stroke: #fb0000; stroke-width: 4; }
.next { width: 63px; height: 22px; margin-left: auto; border-radius: 2px; background: #fff; color: #ee5a28; font-size: 9px; font-weight: 500; gap: 5px; }
.menu { width: 43px; margin-right: 4px; }

.sheetbar { height: 31px; display: flex; align-items: stretch; border-bottom: 1px solid #e2e2e2; }
.chips { padding-left: 14px; gap: 1px; }
.chips b, .status b { width: 10px; height: 11px; background: #2196e8; color: #fff; font-size: 8px; line-height: 11px; font-weight: 500; text-align: center; }
.chips .pink { background: #e91e63; }
.chips b:nth-child(3) { margin-left: 3px; }
.chips .icon { margin-left: 10px; }
.sheet { width: 118px; margin-left: 7px; padding: 0 15px 0 10px; display: flex; align-items: center; justify-content: space-between; border-bottom: 2px solid #f4511e; font-size: 9px; line-height: 10px; }
.status { display: flex; align-items: center; gap: 12px; color: #1c3b2b; }
.status b { width: 9px; height: 9px; line-height: 9px; font-size: 7px; }
.addnew { margin-left: auto; gap: 5px; font-size: 9px; font-weight: 500; }

.body { flex: 1; display: flex; }
aside { width: 233px; border-right: 1px solid #e4e4e4; display: flex; flex-direction: column; color: #4a4a4a; }
.sidehead { height: 28px; display: flex; align-items: center; justify-content: space-between; padding: 0 13px 0 12px; font-size: 9px; }
.add { width: 94px; height: 23px; gap: 5px; border-radius: 2px; background: #fb4f02; color: #ffe9dd; font-weight: 500; box-shadow: 0 1px 2px #0004; }
.rows { flex: 1; }
.rows li { height: 27px; margin-left: 6px; padding-left: 6px; display: flex; align-items: center; }
.rows li.item { padding-left: 16px; }
.rows li.active { background: #fdebe6; }
.eye { color: #aaa; }
.twist { width: 12px; margin-left: 10px; color: #000; }
.fold { margin: 0 5px 0 6px; color: #aaa; }
.info { flex: 1; margin-left: 11px; line-height: 11px; display: flex; flex-direction: column; }
.qty { display: flex; align-items: center; gap: 5px; }
.qty i { width: 8px; height: 8px; border-radius: 50%; }
.rec { width: 14px; height: 14px; border: 1px solid #f4511e; border-radius: 50%; background: linear-gradient(#f4511e, #f4511e) center / 7px 7px no-repeat; margin-right: 5px; }
.dots { width: 14px; margin-right: 7px; color: #222; }
.sidefoot { height: 30px; border-top: 1px solid #e0e0e0; display: flex; align-items: center; padding: 0 10px 1px 9px; }
.sidefoot label { flex: 1; display: flex; align-items: center; gap: 5px; padding: 4px 2px 2px; border-bottom: 1px solid #bbb; margin-right: 10px; font-size: 9px; }
.sidefoot label input { flex: 1; }
::placeholder { color: #999; opacity: 1; }

main { flex: 1; min-width: 0; display: flex; flex-direction: column; }
.planbar { height: 33px; display: flex; align-items: center; padding: 0 53px 0 17px; border-bottom: 1px solid #e6e6e6; }
.muted { color: #aaa; margin-right: 4px; }
.planbar > button[aria-label] { width: 14px; margin-right: 9px; }
.picker { position: relative; margin: 0 9px 0 -5px; }
.current { gap: 2px; color: #555; }
.action { gap: 5px; margin-right: 14px; font-size: 9px; font-weight: 500; }
.scale { margin-left: auto; }
.scale b { margin-left: 3px; font-weight: 500; }

.popup { position: absolute; left: 0; top: 14px; z-index: 5; width: 285px; padding-bottom: 3px; background: #fff; box-shadow: 0 2px 8px #0008; font-size: 9px; color: #444; display: flex; flex-direction: column; }
.find { height: 24px; margin: 0 5px 8px 4px; padding: 2px 0 0 3px; display: flex; align-items: center; gap: 6px; border-bottom: 2px solid #f8603c; }
.find input { flex: 1; }
.group { height: 21px; padding: 0 5px 0 5px; gap: 8px; font-weight: 500; }
.group span { flex: 1; text-align: left; }
.chosen { height: 25px; padding: 0 0 3px 30px; gap: 6px; justify-content: flex-start; background: #fdeae4; border-left: 2px solid #f4511e; }
.pages { height: 135px; display: grid; grid-auto-rows: 1fr; }
.pages button { width: 100%; height: 100%; padding-left: 51px; justify-content: flex-start; }
.pages .hover { background: #f4f4f4; }
.hand { position: absolute; left: 74px; top: 208px; fill: #fff; stroke: #333; stroke-width: 1; }

.canvas { flex: 1; position: relative; }
.plan { width: 100%; height: auto; }
.banner { position: absolute; left: 3px; top: 5px; width: 140px; height: 19px; padding-left: 60px; display: flex; align-items: center; gap: 5px; border-radius: 2px; background: #1850b4; color: #fff; font-size: 9px; font-weight: 500; }
.card { background: #fff; border-radius: 2px; box-shadow: 0 0 4px #0003; color: #111; }
.tools { position: absolute; right: 5px; top: 57px; width: 37px; display: flex; flex-direction: column; gap: 3px; }
.tools .card { padding: 6px 0; }
.tools button { width: 100%; height: 21px; }
.tools .off { color: #bbb; }
.zoombar { position: absolute; right: 61px; bottom: 12px; height: 34px; padding: 0 7px 0 6px; display: flex; align-items: center; }
.zoombar button { width: 23px; }
.zoombar input { appearance: none; width: 65px; height: 12px; margin: 0 6px 0 5px; background: linear-gradient(#bbb, #bbb) center / 100% 1px no-repeat; }
.zoombar input::-webkit-slider-thumb { appearance: none; width: 8px; height: 8px; border-radius: 50%; background: #000; }

.frame { fill: none; stroke: #8a8a8a; stroke-width: 3; }
.axis { fill: none; stroke: #bdbdbd; stroke-width: 2; stroke-dasharray: 24 4 6 4; }
.thin { fill: none; stroke: #a2a2a2; stroke-width: 2; }
.tread { stroke: #999; stroke-width: 2; }
.struct { fill: none; stroke: #7c7c7c; stroke-width: 3; }
.dark { fill: none; stroke: #333; stroke-width: 6; }
.note path { fill: none; stroke: #888; stroke-width: 3; stroke-dasharray: 5 2 3 1; }
.tag { fill: #e8e8e8; stroke: #999; stroke-width: 2; }
.marker path { fill: #333; }
.marker circle { fill: #ddd; stroke: #555; }
.marker .mid { stroke: #777; stroke-width: 2; }
.wallback { fill: none; stroke: #8e7a83; stroke-width: 8; }
.wall { fill: none; stroke: #d42d62; stroke-width: 4; }
.outline { fill: none; stroke: #dc3068; stroke-width: 4; }
.column { fill: none; stroke: #222; stroke-width: 4; }
.loop { fill: none; stroke: #777; stroke-width: 2; }
.bubble circle { fill: #f6f6f6; stroke: #aaa; stroke-width: 2; }
.bubble text { font-size: 14px; text-anchor: middle; fill: #444; }
.solid { fill: #7b7b7b; }
.tiny { font-size: 9px; fill: #666; }
.sheetname { font-size: 13px; font-weight: 700; text-anchor: middle; fill: #333; }
.sheetno { font-size: 34px; font-weight: 700; text-anchor: middle; fill: #333; }
.caption path { fill: none; stroke: #777; stroke-width: 2; }
.caption text { font-size: 12px; fill: #333; }
.caption .sub { font-size: 10px; }
.caption circle { fill: #111; }
.caption .slot { stroke: #999; stroke-width: 2; }
</style>
